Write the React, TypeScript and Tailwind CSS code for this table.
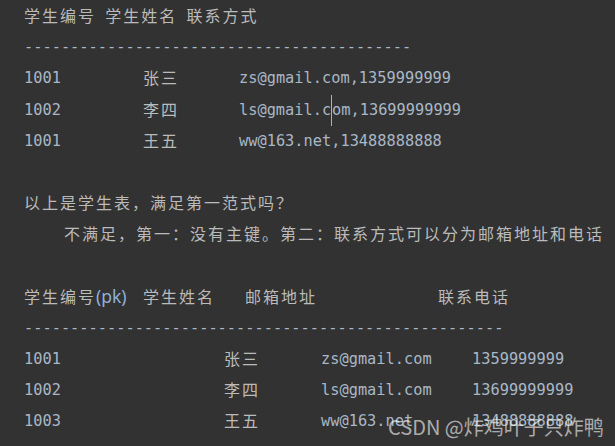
const CJK = /[\u2E80-\u9FFF\u3000-\u303F\uFF00-\uFFEF]/;

// CJK glyphs take a double mono cell, like in the editor
function Txt({ s }: { s: string }) {
  return (
    <>
      {Array.from(s).map((ch, i) =>
        CJK.test(ch) ? (
          <span
            key={i}
            className="inline-block w-[18px] font-['Noto_Sans_CJK_SC',sans-serif] text-[16px] text-[#bbbbbb]"
          >
            {ch}
          </span>
        ) : (
          <span key={i}>{ch}</span>
        )
      )}
    </>
  );
}

function Line({ cells }: { cells: [React.ReactNode, string?][] }) {
  return (
    <div className="flex h-[31.2px] items-center">
      {cells.map(([c, w], i) => (
        <div key={i} className={w ?? ''}>
          {typeof c === 'string' ? <Txt s={c} /> : c}
        </div>
      ))}
    </div>
  );
}

export default function App() {
  return (
    <div className="relative h-[446px] w-[615px] overflow-hidden bg-[#323232] pl-[24px] pt-[1px] font-['DejaVu_Sans_Mono',monospace] text-[15.3px] leading-[31.2px] text-[#a9b7c6] whitespace-pre">
      <Line cells={[['学生编号 学生姓名 联系方式']]} />
      <Line cells={[['-'.repeat(42)]]} />
      <Line cells={[['1001', 'w-[119px]'], ['张三', 'w-[96px]'], ['zs@gmail.com,1359999999']]} />
      <Line
        cells={[
          ['1002', 'w-[119px]'],
          ['李四', 'w-[96px]'],
          [
            <>
              ls@gmail.c
              <span className="inline-block h-[31px] w-0 border-l border-[#b0b0b0] align-top" />
              om,13699999999
            </>,
          ],
        ]}
      />
      <Line cells={[['1001', 'w-[119px]'], ['王五', 'w-[96px]'], ['ww@163.net,13488888888']]} />
      <Line cells={[['']]} />
      <Line cells={[['以上是学生表，满足第一范式吗？']]} />
      <Line cells={[['', 'w-[40px]'], ['不满足，第一：没有主键。第二：联系方式可以分为邮箱地址和电话']]} />
      <Line cells={[['']]} />
      <Line
        cells={[
          [
            <>
              <Txt s="学生编号" />
              <span className="font-['Noto_Sans',sans-serif] text-[17.5px] text-[#8fb0d6]">(pk)</span>
            </>,
            'w-[119px]',
          ],
          ['学生姓名', 'w-[102px]'],
          ['邮箱地址', 'w-[193px]'],
          ['联系电话'],
        ]}
      />
      <Line cells={[['-'.repeat(52)]]} />
      <Line cells={[['1001', 'w-[200px]'], ['张三', 'w-[97px]'], ['zs@gmail.com', 'w-[151px]'], ['1359999999']]} />
      <Line cells={[['1002', 'w-[200px]'], ['李四', 'w-[97px]'], ['ls@gmail.com', 'w-[151px]'], ['13699999999']]} />
      <Line cells={[['1003', 'w-[200px]'], ['王五', 'w-[97px]'], ['ww@163.net', 'w-[151px]'], ['13488888888']]} />

      {/* watermark */}
      <div className="absolute left-[388px] top-[413px] font-['Noto_Sans_CJK_SC',sans-serif] text-[20px] leading-[28px] text-white/60">
        CSDN @炸鸡叶子只炸鸭
      </div>
    </div>
  );
}
